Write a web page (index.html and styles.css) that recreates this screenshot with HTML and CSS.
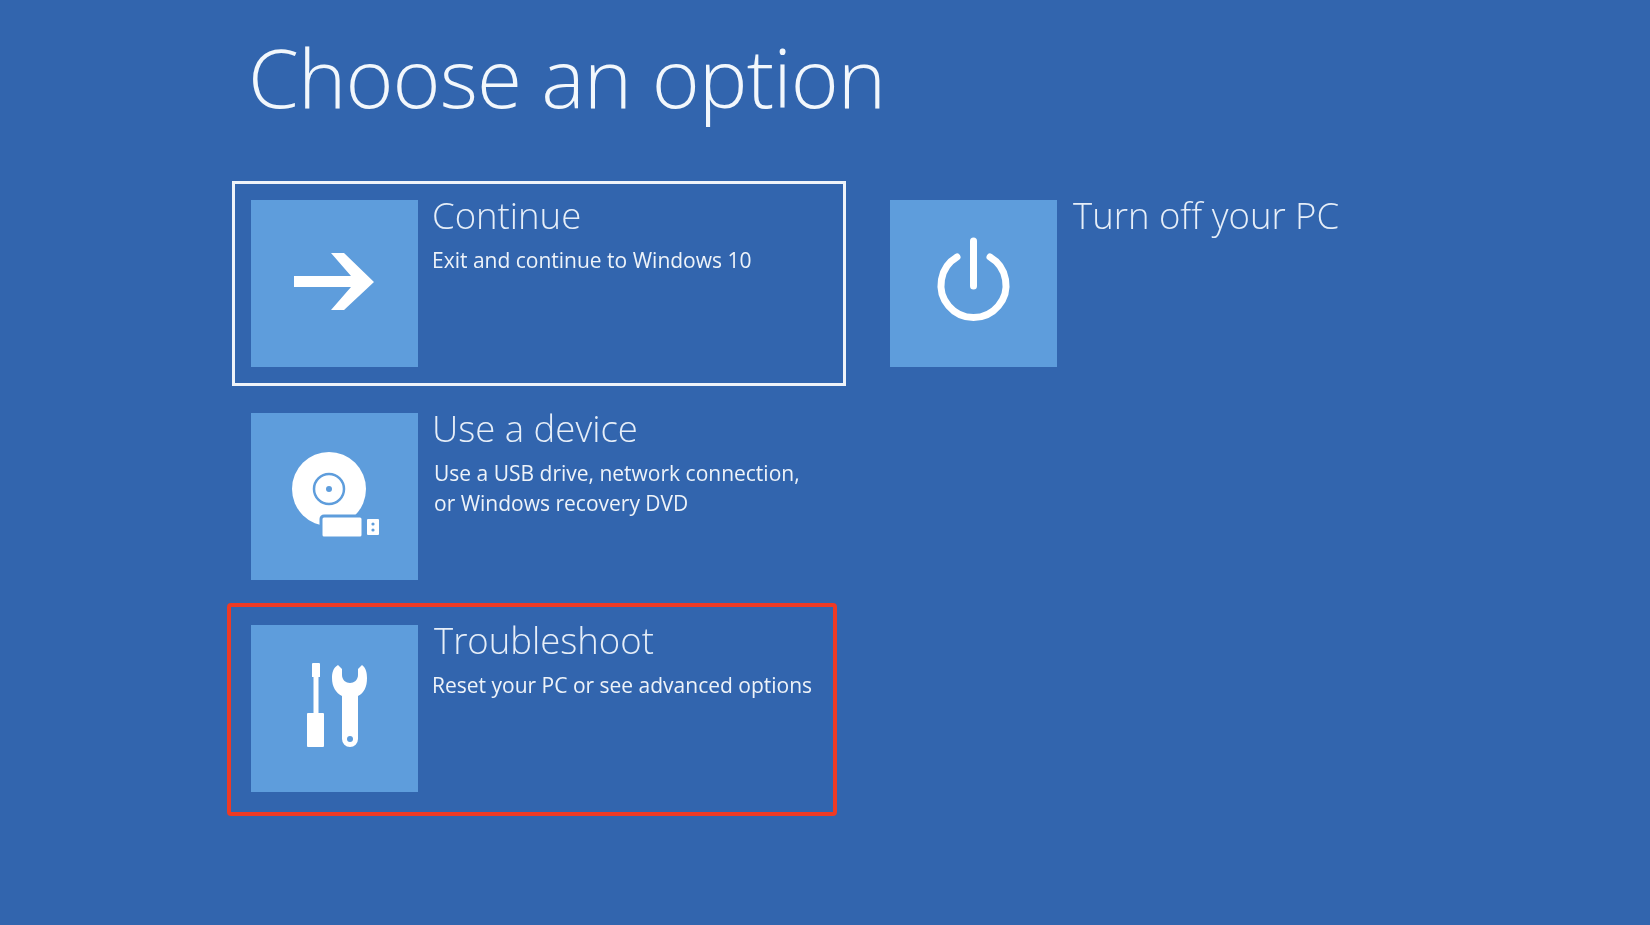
FILE: index.html
```html
<!DOCTYPE html>
<html lang="en">
<head>
    <meta charset="UTF-8">
    <title>Choose an option</title>
    <link rel="stylesheet" href="styles.css">
</head>
<body>
    <div class="screen">
        <h1 class="page-title">Choose an option</h1>
        <div class="options">
            <div class="column">
                <div class="option selected">
                    <div class="tile">
                        <svg viewBox="0 0 167 167"><polygon class="fill" points="80,53 93,53 123,82 93,110 80,110 100,87 43,87 43,76 100,76"/></svg>
                    </div>
                    <div class="option-text">
                        <h2>Continue</h2>
                        <p>Exit and continue to Windows 10</p>
                    </div>
                </div>
                <div class="option">
                    <div class="tile">
                        <svg viewBox="0 0 167 167">
                            <circle class="fill" cx="78" cy="76" r="37"/>
                            <circle class="ring" cx="78" cy="76" r="15"/>
                            <circle class="cut" cx="78" cy="76" r="3"/>
                            <rect class="fill outlined" x="70" y="103" width="42" height="22" rx="3"/>
                            <rect class="fill" x="116" y="106" width="12" height="16" rx="1"/>
                            <circle class="cut" cx="122" cy="111" r="1.6"/>
                            <circle class="cut" cx="122" cy="117" r="1.6"/>
                        </svg>
                    </div>
                    <div class="option-text nudge-desc">
                        <h2>Use a device</h2>
                        <p>Use a USB drive, network connection,<br>or Windows recovery DVD</p>
                    </div>
                </div>
                <div class="option">
                    <div class="tile">
                        <svg viewBox="0 0 167 167">
                            <path class="fill" d="M62 38h6a1 1 0 0 1 1 1v13h-1.500v36h4.500a1 1 0 0 1 1 1v32a1 1 0 0 1-1 1h-15a1 1 0 0 1-1-1v-32a1 1 0 0 1 1-1h5.500v-36h-1.500v-13a1 1 0 0 1 1-1z"/>
                            <path class="fill" d="M87 40C82 43 81 48 81 53C81 62 85 68 91 71L91 114A8 8 0 0 0 107 114L107 71C113 68 116 62 116 53C116 48 115 43 111 40L107 44L107 50C107 55 103 58 99 58C95 58 91 55 91 50L91 44Z"/>
                            <circle class="cut" cx="99" cy="114" r="3"/>
                        </svg>
                    </div>
                    <div class="option-text nudge-title">
                        <h2>Troubleshoot</h2>
                        <p>Reset your PC or see advanced options</p>
                    </div>
                    <div class="callout"></div>
                </div>
            </div>
            <div class="column">
                <div class="option">
                    <div class="tile">
                        <svg viewBox="0 0 167 167">
                            <path class="line" d="M67 57A32.500 32.500 0 1 0 100 57"/>
                            <path class="line" d="M83.500 41V86"/>
                        </svg>
                    </div>
                    <div class="option-text nudge-title">
                        <h2>Turn off your PC</h2>
                    </div>
                </div>
            </div>
        </div>
    </div>
</body>
</html>
```

FILE: styles.css
```css
body {
    margin: 0;
    overflow: hidden;
    background-color: #3265ae;
    color: #fff;
    font-family: "Open Sans", sans-serif;
}

.screen {
    height: 925px;
    padding-left: 232px;
    box-sizing: border-box;
    filter: blur(0.4px);
}

.page-title {
    margin: 0 0 50px 16px;
    padding-top: 21px;
    font-size: 82px;
    line-height: 110px;
    font-weight: 300;
    letter-spacing: -0.95px;
    color: #f2f7fc;
}

.options {
    display: flex;
    gap: 25px;
}

.column {
    width: 614px;
    display: flex;
    flex-direction: column;
    gap: 7.5px;
}

.option {
    position: relative;
    display: flex;
    gap: 14px;
    height: 205px;
    padding: 16px;
    box-sizing: border-box;
    border: 3px solid transparent;
}

.option.selected {
    border-color: #eef3f9;
}

.tile {
    flex: none;
    width: 167px;
    height: 167px;
    background-color: #5e9ddc;
}

.tile svg {
    display: block;
    width: 167px;
    height: 167px;
}

.fill {
    fill: #fff;
}

.cut {
    fill: #5e9ddc;
}

.ring {
    fill: none;
    stroke: #5e9ddc;
    stroke-width: 2.5;
}

.outlined {
    stroke: #5e9ddc;
    stroke-width: 3;
}

.line {
    fill: none;
    stroke: #fff;
    stroke-width: 7;
    stroke-linecap: round;
}

.option-text {
    margin-top: -8px;
}

.option-text h2 {
    margin: 0;
    font-size: 36.5px;
    line-height: 46px;
    font-weight: 300;
    color: #e6eef8;
}

.option-text p {
    margin: 7px 0 0;
    font-size: 21px;
    line-height: 30.5px;
    color: #eef3f9;
}

.nudge-desc p {
    margin-left: 2px;
}

.nudge-title h2 {
    margin-left: 2px;
}

.callout {
    position: absolute;
    left: -8px;
    top: -6px;
    width: 610px;
    height: 213px;
    box-sizing: border-box;
    border: 4px solid #ee3a24;
    border-radius: 4px;
}
```
